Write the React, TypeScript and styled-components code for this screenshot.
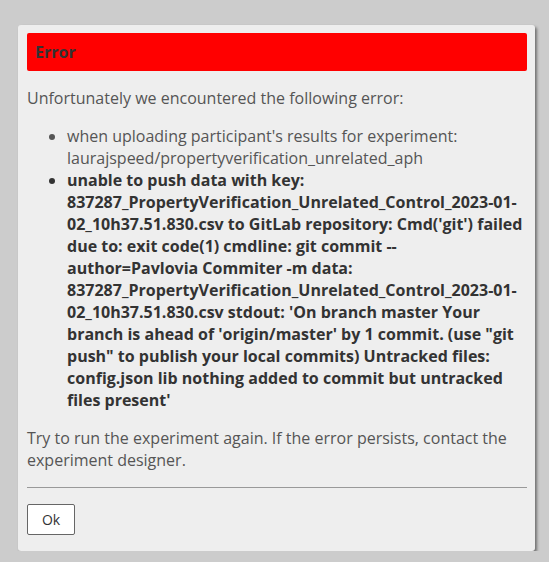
import React from "react";
import styled, { createGlobalStyle } from "styled-components";

const Global = createGlobalStyle`
  html, body {
    margin: 0;
    padding: 0;
    background: #cccccc;
  }
  body {
    font-family: "Open Sans", "DejaVu Sans", sans-serif;
  }
`;

const Page = styled.div`
  padding: 25px 0 0 18px;
`;

const Dialog = styled.div`
  width: 517px;
  box-sizing: border-box;
  background: #eeeeee;
  border-radius: 3px;
  box-shadow: 2px 2px 3px rgba(0, 0, 0, 0.45);
  padding: 8px 8px 16px 9px;
  display: flex;
  flex-direction: column;
`;

const TitleBar = styled.div`
  height: 38px;
  background: #ff0000;
  border-radius: 2px;
  display: flex;
  align-items: center;
  padding-left: 8px;
  font-size: 16px;
  font-weight: 700;
  color: #333333;
`;

const Content = styled.div`
  font-size: 16px;
  line-height: 22px;
  color: #555555;
`;

const Para = styled.p`
  margin: 16px 0;
`;

const List = styled.ul`
  margin: 16px 0;
  padding-left: 40px;
`;

const Item = styled.li<{ $bold?: boolean }>`
  font-weight: ${(p) => (p.$bold ? 700 : 400)};
  color: ${(p) => (p.$bold ? "#333333" : "#555555")};
  overflow-wrap: normal;
`;

const ButtonPane = styled.div`
  border-top: 1px solid #999999;
  padding-top: 16px;
`;

const OkButton = styled.button`
  width: 48px;
  height: 31px;
  box-sizing: border-box;
  background: #ffffff;
  border: 1px solid #666666;
  border-radius: 2px;
  font-family: "Open Sans", "DejaVu Sans", sans-serif;
  font-size: 14px;
  color: #333333;
  padding: 0;
  cursor: pointer;
`;

export default function App() {
  return (
    <>
      <Global />
      <Page>
        <Dialog>
          <TitleBar>Error</TitleBar>
          <Content>
            <Para>Unfortunately we encountered the following error:</Para>
            <List>
              <Item>
                when uploading participant's results for experiment:
                laurajspeed/propertyverification_unrelated_aph
              </Item>
              <Item $bold>
                unable to push data with key:
                837287_PropertyVerification_Unrelated_Control_2023-01-02_10h37.51.830.csv
                to GitLab repository: Cmd('git') failed due to: exit code(1)
                cmdline: git commit --author=Pavlovia Commiter -m data:
                837287_PropertyVerification_Unrelated_Control_2023-01-02_10h37.51.830.csv
                stdout: 'On branch master Your branch is ahead of 'origin/master'
                by 1 commit. (use "git push" to publish your local commits)
                Untracked files: config.json lib nothing added to commit but
                untracked files present'
              </Item>
            </List>
            <Para>
              Try to run the experiment again. If the error persists, contact
              the experiment designer.
            </Para>
          </Content>
          <ButtonPane>
            <OkButton>Ok</OkButton>
          </ButtonPane>
        </Dialog>
      </Page>
    </>
  );
}
